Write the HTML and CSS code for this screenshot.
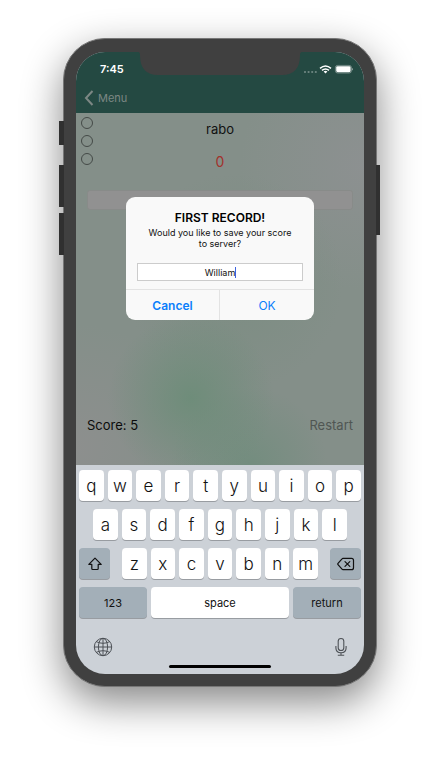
FILE: index.html
```html
<!DOCTYPE html>
<html lang="en">
<head>
<meta charset="utf-8">
<meta name="viewport" content="width=device-width, initial-scale=1">
<title>Game</title>
<link rel="stylesheet" href="styles.css">
</head>
<body>
<div class="phone">
  <span class="side mute"></span>
  <span class="side vol-up"></span>
  <span class="side vol-down"></span>
  <span class="side power"></span>
  <div class="screen">
    <svg class="notch" viewBox="0 0 164 23" aria-hidden="true"><path d="M0 0h164q-2 0-2 3Q162 23 144 23H20Q2 23 2 3Q2 0 0 0z" fill="#404040"/></svg>
    <header class="top">
      <div class="status">
        <span class="time">7:45</span>
        <svg class="indicators" viewBox="0 0 50 12" aria-hidden="true">
          <g fill="#fff" fill-opacity=".35"><circle cx="2" cy="9" r="1.1"/><circle cx="5.600" cy="9" r="1.1"/><circle cx="9.200" cy="9" r="1.1"/><circle cx="12.800" cy="9" r="1.1"/></g>
          <g fill="none" stroke="#fff" stroke-width="1.500"><path d="M17 5.300q5.500-4.600 11 0"/><path d="M19 7.400q3.500-2.900 7 0"/></g>
          <path d="M20.600 8.500q1.900-1.400 3.800 0l-1.900 2z" fill="#fff"/>
          <rect x="32.400" y="2.400" width="16" height="7.600" rx="2.200" fill="none" stroke="#fff" stroke-opacity=".45" stroke-width=".8"/>
          <rect x="33.200" y="3.200" width="14.400" height="6" rx="1.400" fill="#fff"/>
          <path d="M49 5v2.600q1-.3 1-1.300T49 5z" fill="#fff" fill-opacity=".5"/>
        </svg>
      </div>
      <nav class="bar">
        <a class="back" href="#menu">
          <svg viewBox="0 0 10 16" aria-hidden="true"><path d="M8.500 1L2 8l6.500 7" fill="none" stroke="currentColor" stroke-width="2"/></svg>
          Menu
        </a>
      </nav>
    </header>
    <main class="game">
      <div class="lives"><span></span><span></span><span></span></div>
      <h1 class="word">rabo</h1>
      <p class="count">0</p>
      <input class="answer" type="text" aria-label="Answer">
      <div class="footer">
        <span class="score">Score: 5</span>
        <button class="restart" type="button">Restart</button>
      </div>
      <div class="alert" role="dialog" aria-labelledby="alert-title">
        <div class="alert-body">
          <h2 id="alert-title">FIRST RECORD!</h2>
          <label for="player">Would you like to save your score to server?</label>
          <div class="field"><input id="player" type="text" value="William"><span class="caret"></span></div>
        </div>
        <div class="actions">
          <button class="cancel" type="button">Cancel</button>
          <button type="button">OK</button>
        </div>
      </div>
    </main>
    <div class="keyboard">
      <div class="row ten">
        <button>q</button><button>w</button><button>e</button><button>r</button><button>t</button><button>y</button><button>u</button><button>i</button><button>o</button><button>p</button>
      </div>
      <div class="row nine">
        <button>a</button><button>s</button><button>d</button><button>f</button><button>g</button><button>h</button><button>j</button><button>k</button><button>l</button>
      </div>
      <div class="row third">
        <button class="dark" aria-label="Shift"><svg width="16" height="14" viewBox="0 0 16 14" aria-hidden="true"><path d="M8 1.200L1.800 7.400h3v4.200q0 .9.900.9h4.600q.9 0 .9-.9V7.400h3z" fill="none" stroke="#111" stroke-width="1.200" stroke-linejoin="round"/></svg></button>
        <div class="row seven">
          <button>z</button><button>x</button><button>c</button><button>v</button><button>b</button><button>n</button><button>m</button>
        </div>
        <button class="dark" aria-label="Delete"><svg width="18" height="14" viewBox="0 0 18 14" aria-hidden="true"><path d="M6 1.300h8.500q2 0 2 2v7.400q0 2-2 2H6q-.6 0-1-.5L1 7.600q-.5-.6 0-1.200l4-4.600q.4-.5 1-.5zM8 4.600l4.800 4.800m0-4.800L8 9.400" fill="none" stroke="#111" stroke-width="1.200" stroke-linecap="round"/></svg></button>
      </div>
      <div class="row last">
        <button class="dark">123</button><button>space</button><button class="dark">return</button>
      </div>
      <div class="tools">
        <button aria-label="Next keyboard"><svg width="20" height="20" viewBox="0 0 20 20" aria-hidden="true"><g fill="none" stroke="#4d5156" stroke-width="1"><circle cx="10" cy="10" r="8.700"/><ellipse cx="10" cy="10" rx="4.600" ry="8.700"/><path d="M10 1.300v17.400M1.300 10h17.400M3.300 4.600q6.700 3.400 13.400 0M3.300 15.400q6.700-3.400 13.400 0"/></g></svg></button>
        <button aria-label="Dictate"><svg width="12" height="20" viewBox="0 0 12 20" aria-hidden="true"><g fill="none" stroke="#4d5156" stroke-width="1.100"><rect x="3.200" y="1.500" width="5.600" height="12" rx="2.800"/><path d="M.9 9v2q0 4.700 5.100 4.700t5.100-4.700V9M6 15.700v2.600M2.800 18.300h6.400"/></g></svg></button>
      </div>
      <div class="home"></div>
    </div>
  </div>
</div>
</body>
</html>
```
FILE: styles.css
```css
* { box-sizing: border-box; }
body {
  margin: 0;
  padding: 38px 63px 75px;
  background: #fff;
  color: #111;
  font-family: Inter, "Liberation Sans", sans-serif;
}
h1, h2, p { margin: 0; font-weight: 400; }
button {
  border: 0;
  padding: 0;
  margin: 0;
  background: none;
  color: inherit;
  font: inherit;
}
.phone {
  position: relative;
  max-width: 420px;
  margin: 0 auto;
  padding: 13px 12px 12px;
  border: 1px solid #777;
  border-radius: 42px;
  background: #404040;
  box-shadow: 0 15px 40px rgba(0, 0, 0, .48);
}
.side { position: absolute; width: 5px; background: #303030; }
.mute { left: -5px; top: 82px; height: 24px; }
.vol-up { left: -5px; top: 126px; height: 42px; }
.vol-down { left: -5px; top: 174px; height: 42px; }
.power { right: -4px; width: 4px; top: 126px; height: 70px; }
.screen {
  position: relative;
  overflow: hidden;
  border-radius: 29px;
  background: #ccd1d7;
}
.notch {
  position: absolute;
  top: 0;
  left: 50%;
  width: 164px;
  height: 23px;
  margin-left: -82px;
}
.top { background: #244942; }
.status {
  display: flex;
  align-items: center;
  justify-content: space-between;
  height: 34px;
  padding: 0 11px 0 24px;
}
.time { color: #fff; font-size: 11px; font-weight: 600; line-height: 16px; }
.indicators { width: 50px; height: 12px; }
.bar { display: flex; align-items: center; height: 27px; padding: 0 8px 4px; }
.back {
  display: flex;
  align-items: center;
  gap: 4px;
  color: #7c8784;
  font-size: 11px;
  line-height: 16px;
  text-decoration: none;
}
.back svg { width: 10px; height: 16px; }
.game {
  position: relative;
  display: flex;
  flex-direction: column;
  min-height: 352px;
  padding: 8px 11px 30px;
  background:
    radial-gradient(circle at 40% 81%, rgba(105, 140, 118, .8), rgba(105, 140, 118, 0) 25%),
    radial-gradient(circle at 60% 100%, rgba(108, 140, 122, .7), rgba(108, 140, 122, 0) 20%),
    radial-gradient(circle at 55% 48%, rgba(120, 140, 127, .7), rgba(120, 140, 127, 0) 45%),
    radial-gradient(circle at 100% 15%, rgba(144, 145, 148, .7), rgba(144, 145, 148, 0) 30%),
    radial-gradient(circle at 0 95%, rgba(143, 143, 143, .8), rgba(143, 143, 143, 0) 28%),
    #848f89;
}
.lives {
  position: absolute;
  left: 5px;
  top: 4px;
  display: grid;
  gap: 6px;
}
.lives span { width: 12px; height: 12px; border: 1px solid #444a47; border-radius: 50%; }
.word { font-size: 13px; line-height: 16px; text-align: center; }
.count { margin: 16px 0; color: #a2322c; font-size: 14px; line-height: 18px; text-align: center; }
.answer {
  width: 100%;
  height: 20px;
  margin-top: 3px;
  border: 1px solid #888b89;
  border-radius: 3px;
  background: #919191;
}
.footer {
  display: flex;
  justify-content: space-between;
  margin-top: auto;
  font-size: 13px;
  line-height: 20px;
}
.score { color: #0b0c0b; }
.restart { color: #505653; }
.alert {
  position: absolute;
  top: 84px;
  left: 50px;
  right: 50px;
  overflow: hidden;
  border-radius: 9px;
  background: #f9f9f9;
  text-align: center;
}
.alert-body { padding: 13px 11px 8px; }
.alert h2 { color: #000; font-size: 12px; font-weight: 600; line-height: 16px; }
.alert label { display: block; padding: 1px 11px 0; font-size: 9px; line-height: 11px; }
.field { position: relative; margin-top: 14px; }
.field input {
  display: block;
  width: 100%;
  height: 18px;
  padding: 0;
  border: 1px solid #ccc;
  border-radius: 0;
  background: #fff;
  color: #111;
  font: 9px/16px Inter, "Liberation Sans", sans-serif;
  text-align: center;
}
.caret {
  position: absolute;
  top: 4px;
  left: calc(50% + 15px);
  width: 1px;
  height: 11px;
  background: #3d63e0;
}
.actions {
  display: grid;
  grid-template-columns: 1fr 1fr;
  border-top: 1px solid #e3e3e3;
  color: #0b7ffb;
  font-size: 12px;
}
.actions button { height: 30px; }
.actions .cancel { border-right: 1px solid #e3e3e3; font-weight: 600; }
.keyboard {
  display: grid;
  gap: 8px;
  padding: 5px 3px 6px;
}
.row { display: grid; gap: 4px; }
.ten { grid-template-columns: repeat(10, 1fr); }
.nine { grid-template-columns: repeat(9, 1fr); padding: 0 14px; }
.third { grid-template-columns: 31px 1fr 31px; gap: 12px; }
.seven { grid-template-columns: repeat(7, 1fr); }
.last { grid-template-columns: 68px 1fr 68px; }
.row button {
  display: flex;
  align-items: center;
  justify-content: center;
  height: 31px;
  border-radius: 4px;
  background: #fff;
  box-shadow: 0 1px 0 #989ca1;
  font-size: 17px;
  font-weight: 300;
  line-height: 20px;
}
.row .dark { background: #a3afb8; }
.last button { font-size: 11px; font-weight: 400; }
.tools {
  display: flex;
  justify-content: space-between;
  padding: 11px 14px 0;
}
.tools button { display: flex; }
.home {
  width: 102px;
  height: 3px;
  margin: 0 auto;
  border-radius: 2px;
  background: #000;
}
```
